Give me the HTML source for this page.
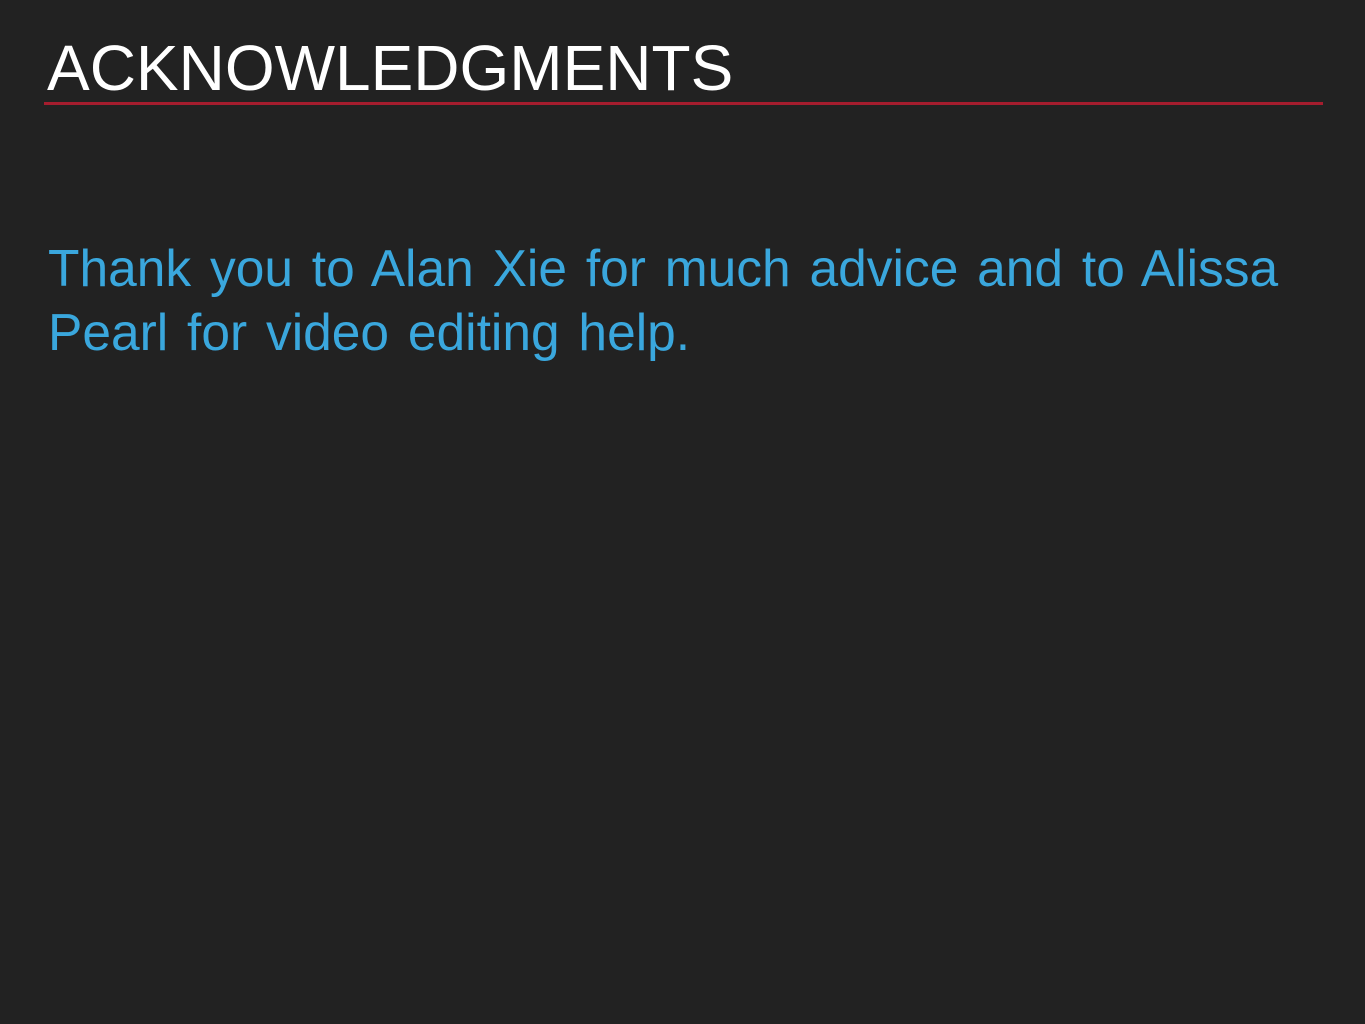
<!DOCTYPE html>
<html><head><meta charset="utf-8"><style>
html,body{margin:0;padding:0;background:#222222;width:1365px;height:1024px;overflow:hidden;}
.t{position:absolute;left:47px;top:30px;font-family:"Liberation Sans",sans-serif;font-size:64px;color:#fff;line-height:76px;white-space:nowrap;}
.line{position:absolute;left:44px;top:102px;width:1279px;height:3px;background:#a51d2e;}
.b{position:absolute;left:48px;top:236px;width:1280px;font-family:"Liberation Sans",sans-serif;font-size:51.5px;line-height:64px;color:#3aa7dd;word-spacing:4.5px;white-space:nowrap;}
</style></head><body>
<div class="t">ACKNOWLEDGMENTS</div>
<div class="line"></div>
<div class="b">Thank you to Alan Xie for much advice and to Alissa<br>Pearl for video editing help.</div>
</body></html>
